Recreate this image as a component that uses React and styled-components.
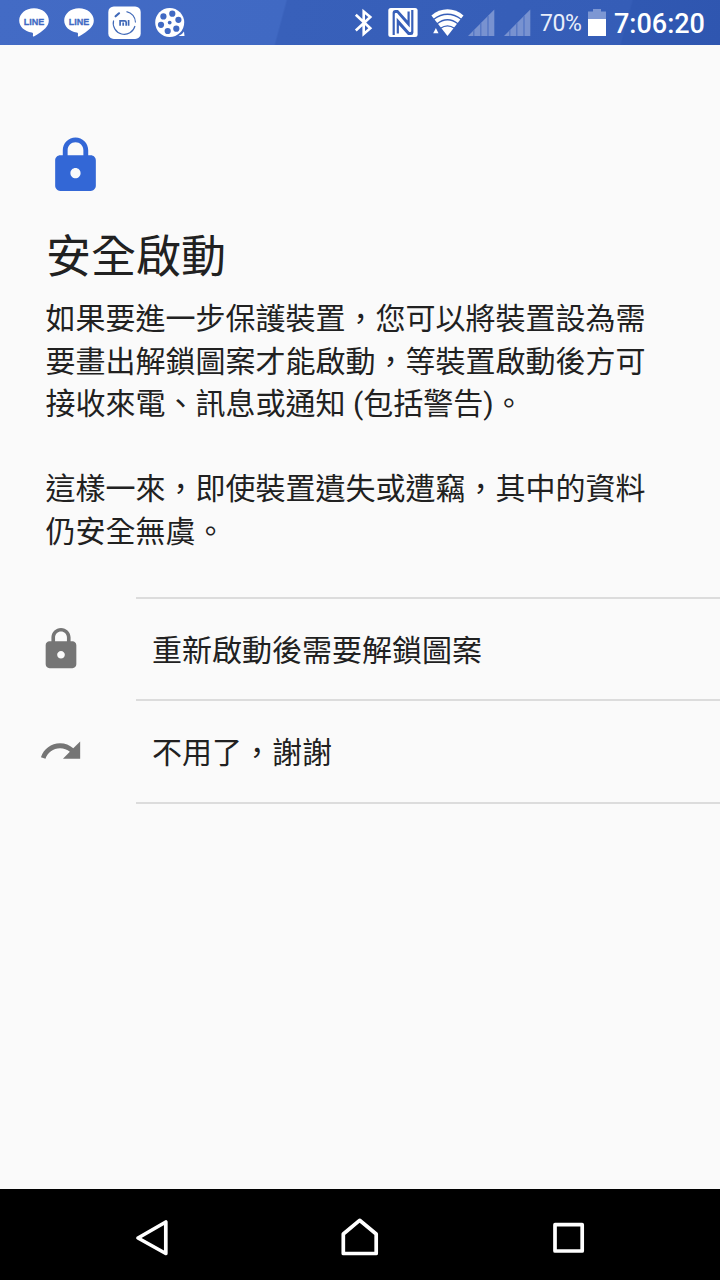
import React from 'react';
import styled, { createGlobalStyle } from 'styled-components';

const GlobalStyle = createGlobalStyle`
  * { box-sizing: border-box; }
  body { margin: 0; background: #fafafa; }
`;

const Screen = styled.div`
  width: 720px;
  height: 1280px;
  display: flex;
  flex-direction: column;
  overflow: hidden;
  background: #fafafa;
  color: #212121;
  font-family: Roboto, 'Noto Sans CJK TC', sans-serif;
`;

const StatusBar = styled.header`
  height: 45px;
  flex: none;
  display: flex;
  justify-content: space-between;
  padding: 0 15px 0 19px;
  color: #fff;
  background:
    linear-gradient(105deg, #436bc5 0, #4069c3 276px, #3860ba 278px, #355db7 610px, #3058b2 612px, #2f56b0 100%);
`;

const IconGroup = styled.div`
  display: flex;
  height: 45px;
`;

const Glyph = styled.svg`
  display: block;
  flex: none;
  height: 45px;
  margin-left: ${(p) => p.$gap || 0}px;
  fill: #fff;
`;

const BatteryLevel = styled.span`
  width: 42px;
  margin-left: 9.5px;
  font-size: 23px;
  line-height: 48px;
  letter-spacing: -0.4px;
  white-space: nowrap;
  color: #e9eefa;
`;

const Clock = styled.time`
  width: 91px;
  margin-left: 8px;
  font-size: 27px;
  font-weight: 500;
  line-height: 49px;
  white-space: nowrap;
`;

const Content = styled.main`
  flex: 1;
  padding-top: 90px;
`;

const HeaderIcon = styled.svg`
  display: block;
  width: 61px;
  height: 61px;
  margin-left: 45px;
  fill: #3367d6;
`;

const Title = styled.h1`
  margin: 28.5px 0 0 46px;
  font-size: 45px;
  font-weight: 400;
  line-height: 66px;
`;

const Description = styled.p`
  margin: 7.500px 0 0 45.5px;
  font-size: 30px;
  line-height: 42.6px;
  white-space: pre;
`;

const Options = styled.div`
  margin-top: 43.4px;
`;

const Option = styled.div`
  display: flex;
  align-items: stretch;
  height: 102.5px;
`;

const OptionIcon = styled.div`
  width: 136px;
  padding: 1px 0 0 38.3px;
  display: flex;
  align-items: center;
  svg { width: 46px; height: 46px; fill: #757575; }
`;

const OptionLabel = styled.div`
  flex: 1;
  display: flex;
  align-items: center;
  padding: 0 0 2.500px 16px;
  border-top: 2px solid #dcdcdc;
  font-size: 30px;
`;

const EndDivider = styled.div`
  height: 2px;
  margin-left: 136px;
  background: #dcdcdc;
`;

const NavBar = styled.nav`
  flex: none;
  height: 91px;
  padding: 6px 132px 0;
  display: flex;
  align-items: center;
  justify-content: space-between;
  background: #000;
  svg {
    display: block;
    fill: none;
    stroke: #fff;
    stroke-width: 3.7;
    stroke-linejoin: round;
  }
`;

const LOCK =
  'M18 8h-1V6c0-2.76-2.24-5-5-5S7 3.24 7 6v2H6c-1.1 0-2 .9-2 2v10c0 1.1.9 2 2 2h12c1.1 0 2-.9 2-2V10c0-1.1-.9-2-2-2zm-6 9c-1.1 0-2-.9-2-2s.9-2 2-2 2 .9 2 2-.9 2-2 2zm3.1-9H8.9V6c0-1.71 1.39-3.1 3.1-3.1 1.71 0 3.1 1.39 3.1 3.1v2z';
const SKIP =
  'M18.4 10.6C16.55 8.99 14.15 8 11.5 8c-4.65 0-8.58 3.03-9.96 7.22L3.9 16c1.05-3.19 4.05-5.5 7.6-5.5 1.95 0 3.73.72 5.12 1.88L13 16h9V7l-3.6 3.6z';

function LineIcon({ gap }) {
  return (
    <Glyph $gap={gap} width="30" viewBox="0 0 30 45">
      <path d="M15 8.3C6.7 8.3.2 13.8.2 20.6c0 6.1 5.4 11 12.5 12 1.4.3 1.5 1 1.2 2.8-.1 1 .4 1.5 1.4.9C19 34 23.8 31 26.4 28.2 28.8 25.8 29.8 23.4 29.8 20.6 29.8 13.8 23.3 8.3 15 8.3z" />
      <text x="15" y="24.8" textAnchor="middle" fill="#4069c3" stroke="#4069c3" strokeWidth="0.3" fontFamily="'Liberation Sans', sans-serif" fontWeight="700" fontSize="9.6" textLength="20.5" lengthAdjust="spacingAndGlyphs">LINE</text>
    </Glyph>
  );
}

function MiIcon() {
  return (
    <Glyph $gap={13.8} width="33" viewBox="0 0 33 45">
      <rect x="0.3" y="6.5" width="32.4" height="32.4" rx="5.5" />
      <g fill="none" stroke="#4069b8">
        <path d="M18.5 11.6A11 11 0 0 1 27.5 22.5M27 26A11 11 0 0 1 5.6 20.5" strokeWidth="1.1" />
        <path d="M7.6 16.3l3.4-3" strokeWidth="2.2" strokeLinecap="round" />
        <path d="M12.1 25.7v-4.9h4.5q1.6 0 1.6 1.6v3.3M15.2 22.6v3.1M20.6 20v5.7" strokeWidth="1.7" />
      </g>
    </Glyph>
  );
}

function FilmIcon() {
  const holes = [[17.3, 13.7], [23.4, 19.8], [21.3, 28.7], [12.7, 31], [6, 24.8], [8.4, 16.4]];
  return (
    <Glyph $gap={14} width="31" viewBox="0 0 31 45">
      <circle cx="14.7" cy="22.6" r="14.5" />
      <path d="M23.5 36q3.5-1 5.5-4.500l.5 4.500z" />
      <g fill="#4069c3">
        {holes.map(([x, y]) => <circle key={x} cx={x} cy={y} r="3.1" />)}
        <circle cx="14.7" cy="22.6" r="1.9" />
      </g>
    </Glyph>
  );
}

function BluetoothIcon() {
  return (
    <Glyph width="19" viewBox="0 0 19 45">
      <path d="M1.8 14.8L16.3 28.3 9.7 34V11.5L16.3 17 1.8 30.5" fill="none" stroke="#fff" strokeWidth="2.6" />
    </Glyph>
  );
}

function NfcIcon() {
  return (
    <Glyph $gap={15} width="30" viewBox="0 0 30 45">
      <rect x="0.3" y="8" width="29.3" height="29" rx="2.5" />
      <g fill="#375fb9">
        <path d="M4.600 35V12.500Q4.600 10 7 10H10L19.500 20.500V11.500H21.700V27.500L9 13H7.500Q6.800 13 6.800 14V35z" />
        <path d="M25.400 10V32.500Q25.400 35 23 35H20L10.900 25V33.500H8.700V17.700L21.300 32H22.500Q23.200 32 23.200 31V10z" />
      </g>
    </Glyph>
  );
}

function WifiIcon() {
  return (
    <Glyph $gap={13} width="33" viewBox="0 0 33 45">
      <path d="M.4 15.5C9.5 7 23.5 7 32.5 15.5L16.5 36z" />
      <g fill="none" stroke="#375fb9" strokeWidth="1.3">
        <path d="M2.5 19.5q14-10.500 28 0M5.8 23.9q10.700-8.300 21.400 0M9.500 28.300q7-5 14 0" />
      </g>
      <path d="M2.2 33.2h5.300l-2.600-5.200z" />
    </Glyph>
  );
}

function SignalIcon({ gap }) {
  return (
    <Glyph $gap={gap} width="27" viewBox="0 0 27 45">
      <path d="M0 36L26.3 9.5V36z" fill="#7892d0" />
      <path d="M5.8 30v6M12.8 23v13M20 16v20" stroke="#5274c3" strokeWidth="1.3" />
    </Glyph>
  );
}

function BatteryIcon() {
  return (
    <Glyph $gap={6} width="18" viewBox="0 0 18 45">
      <path d="M0 11.5h5V9h8v2.5h5V19H0z" fill="#7d97d3" />
      <rect y="19" width="18" height="17" />
    </Glyph>
  );
}

export default function App() {
  return (
    <Screen>
      <GlobalStyle />
      <StatusBar>
        <IconGroup>
          <LineIcon />
          <LineIcon gap={15.2} />
          <MiIcon />
          <FilmIcon />
        </IconGroup>
        <IconGroup>
          <BluetoothIcon />
          <NfcIcon />
          <WifiIcon />
          <SignalIcon gap={4} />
          <SignalIcon gap={9} />
          <BatteryLevel>70%</BatteryLevel>
          <BatteryIcon />
          <Clock>7:06:20</Clock>
        </IconGroup>
      </StatusBar>
      <Content>
        <HeaderIcon viewBox="0 0 24 24"><path d={LOCK} /></HeaderIcon>
        <Title>安全啟動</Title>
        <Description>
          {'如果要進一步保護裝置，您可以將裝置設為需\n要畫出解鎖圖案才能啟動，等裝置啟動後方可\n接收來電、訊息或通知 (包括警告)。\n\n這樣一來，即使裝置遺失或遭竊，其中的資料\n仍安全無虞。'}
        </Description>
        <Options>
          <Option>
            <OptionIcon><svg viewBox="0 0 24 24"><path d={LOCK} /></svg></OptionIcon>
            <OptionLabel>重新啟動後需要解鎖圖案</OptionLabel>
          </Option>
          <Option>
            <OptionIcon><svg viewBox="0 0 24 24"><path d={SKIP} /></svg></OptionIcon>
            <OptionLabel>不用了，謝謝</OptionLabel>
          </Option>
          <EndDivider />
        </Options>
      </Content>
      <NavBar>
        <svg width="40" height="40" viewBox="132 1218 40 40"><path d="M138 1238L165.8 1222V1253.5z" /></svg>
        <svg width="40" height="40" viewBox="340 1218 40 40"><path d="M343.3 1253.5V1234L359.6 1220.3 376.2 1234V1253.5z" /></svg>
        <svg width="40" height="40" viewBox="548 1218 40 40"><path d="M555 1224.7H582.2V1251H555z" /></svg>
      </NavBar>
    </Screen>
  );
}
